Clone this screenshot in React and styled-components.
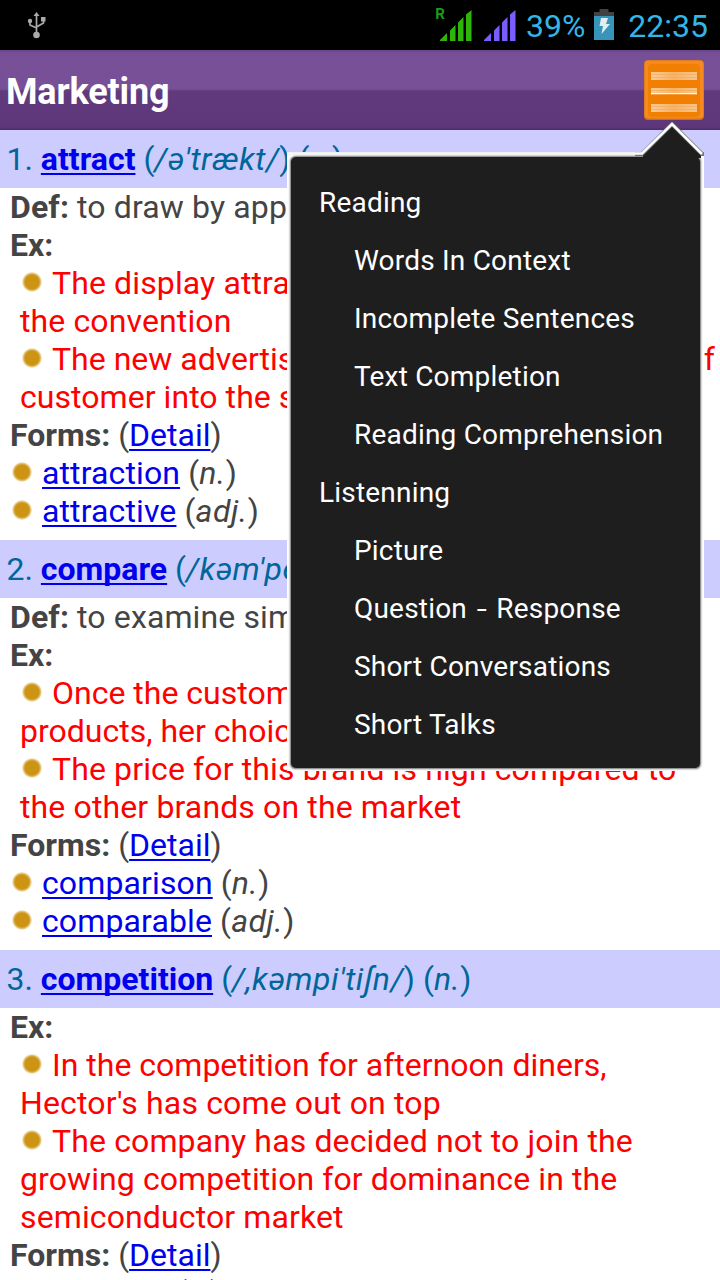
import React from "react";
import styled, { createGlobalStyle } from "styled-components";

const Global = createGlobalStyle`
  html, body { margin: 0; padding: 0; background: #fff; overflow: hidden; }
  *, *::before, *::after { box-sizing: border-box; }
`;

const Screen = styled.div`
  position: relative;
  width: 720px;
  height: 1280px;
  overflow: hidden;
  background: #fff;
  color: #444;
  font-family: Roboto, "Noto Sans", sans-serif;
  font-size: 32px;
  line-height: 38px;
`;

const StatusBar = styled.header`
  display: flex;
  align-items: center;
  justify-content: space-between;
  height: 50px;
  padding: 0 12px 0 27px;
  background: #000;
  color: #33b5e5;
`;

const StatusGroup = styled.div`
  display: flex;
  align-items: center;
`;

const StatusText = styled.span`
  padding-top: 1px;
  font-size: 32px;
  letter-spacing: ${(p) => p.$spacing || "0"};
  margin-right: ${(p) => p.$gap || 0}px;
`;

const Icon = styled.svg`
  display: block;
  flex: none;
  margin-right: ${(p) => p.$gap || 0}px;
`;

const TitleBar = styled.div`
  display: flex;
  align-items: center;
  justify-content: space-between;
  height: 80px;
  padding: 0 16px 0 6px;
  background: linear-gradient(#69458a 0, #774f96 3px, #785098 39px, #603a7d 41px, #5e377a 77px, #4c2b64 80px);
`;

const Title = styled.h1`
  margin: 0;
  padding-top: 3px;
  color: #fff;
  font-size: 36px;
  font-weight: 700;
  line-height: 42px;
  letter-spacing: -0.15px;
`;

const WordBar = styled.div`
  height: 58px;
  padding: 10px 6.5px;
  background: #ccccff;
  color: #006699;
  white-space: nowrap;
`;

const Phonetic = styled.i`
  letter-spacing: 0.55px;
`;

const Body = styled.div`
  padding: 0 10px 10px;
`;

const Line = styled.div`
  height: 38px;
  padding-left: ${(p) => (p.$example ? 10 : 0)}px;
  color: ${(p) => (p.$example ? "#ff0000" : "#444")};
  white-space: nowrap;
  letter-spacing: ${(p) => p.$spacing || 0}px;
`;

const SpreadText = styled.span`
  display: inline-flex;
  justify-content: space-between;
  width: 663px;
`;

const Link = styled.a`
  color: #0000ee;
  font-weight: ${(p) => (p.$bold ? 700 : 400)};
  text-decoration: underline;
  text-decoration-thickness: 2px;
  text-underline-offset: 3px;
  text-decoration-skip-ink: none;
`;

const Dot = styled.span`
  display: inline-block;
  width: 20px;
  height: 20px;
  margin: 0 10px 0 2px;
  vertical-align: 2px;
  border-radius: 50%;
  background: radial-gradient(circle, #cc9412 0, #cc9412 7px, rgba(204, 148, 18, 0.45) 9px, rgba(220, 170, 60, 0) 10.4px);
`;

const Popup = styled.nav`
  position: absolute;
  left: 287px;
  top: 152px;
  width: 417px;
  height: 619px;
  padding: 5px 4px 3px;
  background: linear-gradient(#eee, #fff 4px);
`;

const Panel = styled.div`
  display: flex;
  flex-direction: column;
  height: 611px;
  padding: 17px 0 0 28px;
  border-radius: 5px;
  background: #1e1e1e;
  box-shadow: 0 0 2px 0.5px rgba(30, 30, 30, 0.65);
  color: #fff;
  font-size: 28px;
`;

const Pointer = styled.svg`
  position: absolute;
  left: 348px;
  top: -31px;
`;

const MenuItem = styled.div`
  height: 58px;
  padding-left: ${(p) => (p.$nested ? 35 : 0)}px;
  line-height: 58px;
  white-space: nowrap;
  letter-spacing: 0.2px;
`;

const Hyphen = styled.span`
  display: inline-block;
  margin: 0 1.5px;
  transform: scaleX(1.3);
  padding: 0 2px;
`;

const UsbIcon = () => (
  <Icon width="20" height="28" viewBox="0 0 20 28" fill="none" stroke="#aaa" strokeWidth="1.7">
    <path d="M9.5 24V3M9.5 17L3 14V9M9.5 16L16.5 12V8" />
    <circle cx="9.5" cy="24" r="3.3" fill="#aaa" stroke="none" />
    <circle cx="3" cy="10" r="2.2" fill="#aaa" stroke="none" />
    <path d="M14 6h4.5v4.5H14zM9.5 1l3 4h-6z" fill="#aaa" stroke="none" />
  </Icon>
);

const bars = ["M0 31V30L7 23V31Z", "M10 31V20.5L15.5 15V31Z", "M18 31V12.5L23.5 7V31Z", "M26 31V4.5L31.5 0V31Z"];

const Signal = ({ color, gap }) => (
  <Icon $gap={gap} width="32" height="31" viewBox="0 0 32 31" fill={color}>
    {bars.map((d) => (
      <path key={d} d={d} />
    ))}
  </Icon>
);

const Roaming = styled.span`
  align-self: flex-start;
  padding-top: 1px;
  margin: 0 -5px 0 0;
  font-size: 15px;
  font-weight: 700;
  line-height: 15px;
  color: #1c9a1c;
`;

const BatteryIcon = () => (
  <Icon $gap={14} width="20" height="32" viewBox="0 0 20 32">
    <path d="M5.5 0h9v3H20v5H0V3h5.500Z" fill="#424242" />
    <path d="M0 7h20v24H0z" fill="#3795bb" />
    <path d="M7 9h7l-2 6h4L7.500 25l1.500-8H5.500Z" fill="#e4eef2" />
  </Icon>
);

const MenuIcon = () => (
  <Icon width="60" height="60" viewBox="0 0 60 60">
    <defs>
      <linearGradient id="rule" x1="0" x2="1">
        <stop offset="0" stopColor="#fff" stopOpacity=".6" />
        <stop offset=".5" stopColor="#fff" stopOpacity=".4" />
        <stop offset="1" stopColor="#fff" stopOpacity=".55" />
      </linearGradient>
    </defs>
    <rect width="60" height="60" rx="4" fill="#cc6f16" />
    <rect x="0.500" y="0.500" width="59" height="58" rx="4" fill="#f48a20" />
    <rect x="4" y="4" width="52" height="53" rx="4" fill="#f17f02" />
    <g fill="url(#rule)">
      <path d="M7 12h46v8H7zM7 28h46v6.500H7zM7 44h46v8H7z" />
    </g>
    <g stroke="#f9a850" strokeWidth="1">
      <path d="M7 14.500h46M7 17.500h46M7 30.500h46M7 46.500h46M7 49.500h46" opacity=".6" />
      <path d="M7 33.500h46" stroke="#fff" strokeWidth="1" opacity=".85" />
    </g>
  </Icon>
);

const entries = [
  {
    word: "attract", phonetic: "/ə'trækt/", kind: "v.", spacing: 0.12,
    definition: "to draw by appeal",
    examples: [
      ["The display attracted many people at", 0.12],
      ["the convention", 0.12],
      [["The new advertising attracts", "a lot", "of"], 0],
      ["customer into the store", 0.05],
    ],
    forms: [["attraction", "n."], ["attractive", "adj."]],
  },
  {
    word: "compare", phonetic: "/kəm'peə/", kind: "v.", spacing: 0.12,
    definition: "to examine similarities",
    examples: [
      ["Once the customer compared the", 0],
      ["products, her choice was easy", 0],
      ["The price for this brand is high compared to", 0.12],
      ["the other brands on the market", 0.13],
    ],
    forms: [["comparison", "n."], ["comparable", "adj."]],
  },
  {
    word: "competition", phonetic: "/,kəmpi'tiʃn/", kind: "n.", spacing: 0.12,
    examples: [
      ["In the competition for afternoon diners,", 0],
      ["Hector's has come out on top", 0.14],
      ["The company has decided not to join the", 0.13],
      ["growing competition for dominance in the", 0.09],
      ["semiconductor market", 0.12],
    ],
    forms: [["compete", "v."]],
  },
];

const bulletRows = [0, 2];

const menu = [
  ["Reading", ["Words In Context", "Incomplete Sentences", "Text Completion", "Reading Comprehension"]],
  ["Listenning", ["Picture", "Question - Response", "Short Conversations", "Short Talks"]],
];

const MenuLabel = ({ text }) => {
  const [before, after] = text.split(" - ");
  return after ? <>{before} <Hyphen>-</Hyphen> {after}</> : text;
};

const ExampleText = ({ text }) =>
  Array.isArray(text) ? (
    <SpreadText>{text.map((part) => <span key={part}>{part}</span>)}</SpreadText>
  ) : (
    text
  );

const Entry = ({ index, entry }) => (
  <section>
    <WordBar>
      {index}. <Link $bold>{entry.word}</Link> (<Phonetic>{entry.phonetic}</Phonetic>) (<Phonetic>{entry.kind}</Phonetic>)
    </WordBar>
    <Body>
      {entry.definition && <Line $spacing={0.12}><b>Def:</b> {entry.definition}</Line>}
      <Line><b>Ex:</b></Line>
      {entry.examples.map(([text, spacing], i) => (
        <Line key={i} $example $spacing={spacing}>
          {bulletRows.includes(i) && <Dot />}
          <ExampleText text={text} />
        </Line>
      ))}
      <Line><b>Forms:</b> (<Link>Detail</Link>)</Line>
      {entry.forms.map(([form, kind]) => (
        <Line key={form} $spacing={entry.spacing}>
          <Dot />
          <Link>{form}</Link> (<Phonetic>{kind}</Phonetic>)
        </Line>
      ))}
    </Body>
  </section>
);

export default function App() {
  return (
    <Screen>
      <Global />
      <StatusBar>
        <UsbIcon />
        <StatusGroup>
          <Roaming>R</Roaming>
          <Signal color="#2fb50a" gap={12} />
          <Signal color="#7a5cff" gap={10} />
          <StatusText $gap={9}>39%</StatusText>
          <BatteryIcon />
          <StatusText>22:35</StatusText>
        </StatusGroup>
      </StatusBar>
      <TitleBar>
        <Title>Marketing</Title>
        <MenuIcon />
      </TitleBar>
      {entries.map((entry, i) => (
        <Entry key={entry.word} index={i + 1} entry={entry} />
      ))}
      <Popup>
        <Panel>
          {menu.map(([group, items]) => (
            <React.Fragment key={group}>
              <MenuItem>{group}</MenuItem>
              {items.map((item) => (
                <MenuItem key={item} $nested><MenuLabel text={item} /></MenuItem>
              ))}
            </React.Fragment>
          ))}
        </Panel>
        <Pointer width="72" height="38" viewBox="0 0 72 38">
          <path d="M8 33L37 4L66 33V37H8Z" fill="#1e1e1e" />
          <path d="M0 33H7L37 3L67 33H69" fill="none" stroke="#777" strokeWidth="4" />
          <path d="M0 32.500H7L37 3L67 33" fill="none" stroke="#fff" strokeWidth="2.500" />
        </Pointer>
      </Popup>
    </Screen>
  );
}
